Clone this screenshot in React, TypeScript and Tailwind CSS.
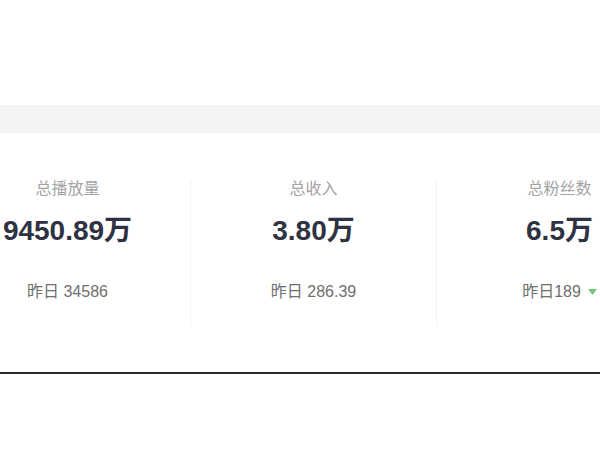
import React from "react";

const font = { fontFamily: '"Liberation Sans", "Noto Sans CJK SC", sans-serif' };

function Stat({ title, value, yesterday, arrow }: { title: string; value: string; yesterday: string; arrow?: boolean }) {
  return (
    <div className="w-[245px] shrink-0 flex flex-col items-center">
      <div className="text-[16px] leading-[20px] text-[#a3a3a3]">{title}</div>
      <div className="mt-[14px] text-[28px] leading-[36px] font-bold text-[#2e3242]">{value}</div>
      <div className="mt-[33px] flex items-center text-[16px] leading-[20px] text-[#6f6f6f]">
        <span>{yesterday}</span>
        {arrow && (
          <svg width="9" height="6" viewBox="0 0 9 6" className="ml-[7px]">
            <path d="M0 0 L9 0 L4.5 6 Z" fill="#76c47a" />
          </svg>
        )}
      </div>
    </div>
  );
}

export default function App() {
  return (
    <div className="w-[600px] h-[449px] overflow-hidden bg-white" style={font}>
      <div className="h-[105px] bg-white" />
      <div className="h-[28px] bg-[#f4f4f6]" />
      <div className="h-[239px] bg-white pt-[46px]">
        <div className="flex ml-[-55px]">
          <Stat title="总播放量" value="9450.89万" yesterday="昨日 34586" />
          <div className="w-px h-[147px] mt-[1px] bg-[#f3f3f3] shrink-0" />
          <Stat title="总收入" value="3.80万" yesterday="昨日 286.39" />
          <div className="w-px h-[147px] mt-[1px] bg-[#f3f3f3] shrink-0" />
          <Stat title="总粉丝数" value="6.5万" yesterday="昨日189" arrow />
        </div>
      </div>
      <div className="h-[2px] bg-[#2e2e28]" />
      <div className="h-[75px] bg-white" />
    </div>
  );
}
